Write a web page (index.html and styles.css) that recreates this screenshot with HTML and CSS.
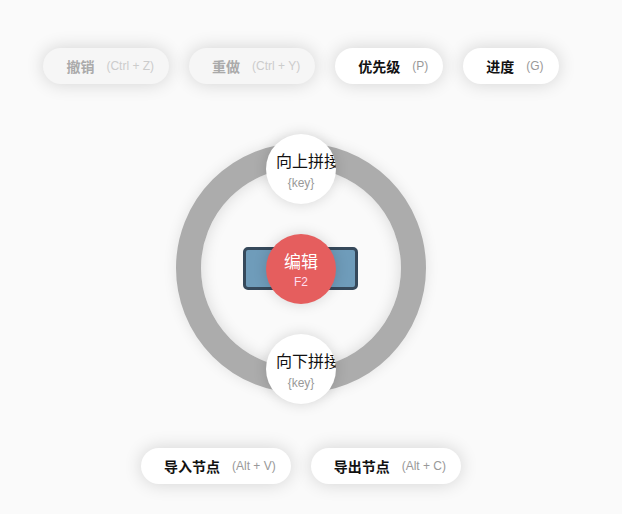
FILE: index.html
```html
<!DOCTYPE html>
<html>
<head>
<meta charset="utf-8">
<link rel="stylesheet" href="styles.css">
</head>
<body>
<div class="page">
  <div class="toolbar top">
    <div class="btn disabled"><span class="label">撤销</span><span class="key">(Ctrl + Z)</span></div>
    <div class="btn disabled"><span class="label">重做</span><span class="key">(Ctrl + Y)</span></div>
    <div class="btn"><span class="label">优先级</span><span class="key">(P)</span></div>
    <div class="btn"><span class="label">进度</span><span class="key">(G)</span></div>
  </div>
  <div class="diagram">
    <div class="ring">
      <div class="node-rect"></div>
      <div class="sat up"><span class="sat-title">向上拼接</span><span class="sat-key">{key}</span></div>
      <div class="center"><span class="c-title">编辑</span><span class="c-key">F2</span></div>
      <div class="sat down"><span class="sat-title">向下拼接</span><span class="sat-key">{key}</span></div>
    </div>
  </div>
  <div class="toolbar bottom">
    <div class="btn"><span class="label">导入节点</span><span class="key">(Alt + V)</span></div>
    <div class="btn"><span class="label">导出节点</span><span class="key">(Alt + C)</span></div>
  </div>
</div>
</body>
</html>
```
FILE: styles.css
```css
html, body {
  margin: 0;
  padding: 0;
  background: #fafafa;
  font-family: "Liberation Sans", Arial, "Noto Sans CJK SC", sans-serif;
}
.page {
  width: 602px;
  padding-bottom: 40px;
  display: flex;
  flex-direction: column;
  align-items: center;
}
.toolbar {
  display: flex;
  gap: 20px;
}
.toolbar.top {
  margin-top: 48px;
}
.toolbar.bottom {
  margin-top: 55px;
}
.btn {
  height: 36px;
  box-sizing: border-box;
  padding: 0 15px 0 23px;
  border-radius: 18px;
  background: #fff;
  box-shadow: 0 0 18px rgba(0, 0, 0, 0.16);
  display: flex;
  align-items: center;
  gap: 12px;
}
.btn .label {
  font-size: 14px;
  font-weight: bold;
  color: #111;
}
.btn .key {
  font-size: 12px;
  color: #999;
}
.btn.disabled {
  background: #f6f6f6;
}
.btn.disabled .label {
  color: #aaa;
}
.btn.disabled .key {
  color: #ccc;
}
.diagram {
  margin-top: 59px;
}
.ring {
  position: relative;
  width: 250px;
  height: 250px;
  box-sizing: border-box;
  border: 25px solid #acacac;
  border-radius: 50%;
  background: #fafafa;
  box-shadow: 0 0 14px rgba(0, 0, 0, 0.1), inset 0 0 16px rgba(0, 0, 0, 0.14);
}
.node-rect {
  position: absolute;
  left: 42px;
  top: 79px;
  width: 115px;
  height: 43px;
  box-sizing: border-box;
  border: 3px solid #36495b;
  border-radius: 5px;
  background: #6f9cba;
}
.sat, .center {
  position: absolute;
  left: 65px;
  width: 70px;
  height: 70px;
  border-radius: 50%;
  overflow: hidden;
  display: flex;
  flex-direction: column;
  align-items: center;
  justify-content: center;
  box-sizing: border-box;
}
.sat {
  background: #fff;
  box-shadow: 0 0 14px rgba(0, 0, 0, 0.15);
  padding: 4px 10px 0;
}
.sat.up {
  top: -34px;
}
.sat.down {
  top: 166px;
}
.sat-title {
  font-size: 16px;
  color: #111;
  white-space: nowrap;
  align-self: flex-start;
  line-height: 20px;
}
.sat-key {
  font-size: 12px;
  color: #999;
  line-height: 16px;
  margin-top: 3px;
}
.center {
  top: 66px;
  background: #e55e5e;
  box-shadow: 0 0 14px rgba(0, 0, 0, 0.15);
  padding-top: 5px;
}
.c-title {
  font-size: 17px;
  color: #fff;
  line-height: 20px;
}
.c-key {
  font-size: 12px;
  color: #fde;
  line-height: 16px;
  margin-top: 1px;
}
```
